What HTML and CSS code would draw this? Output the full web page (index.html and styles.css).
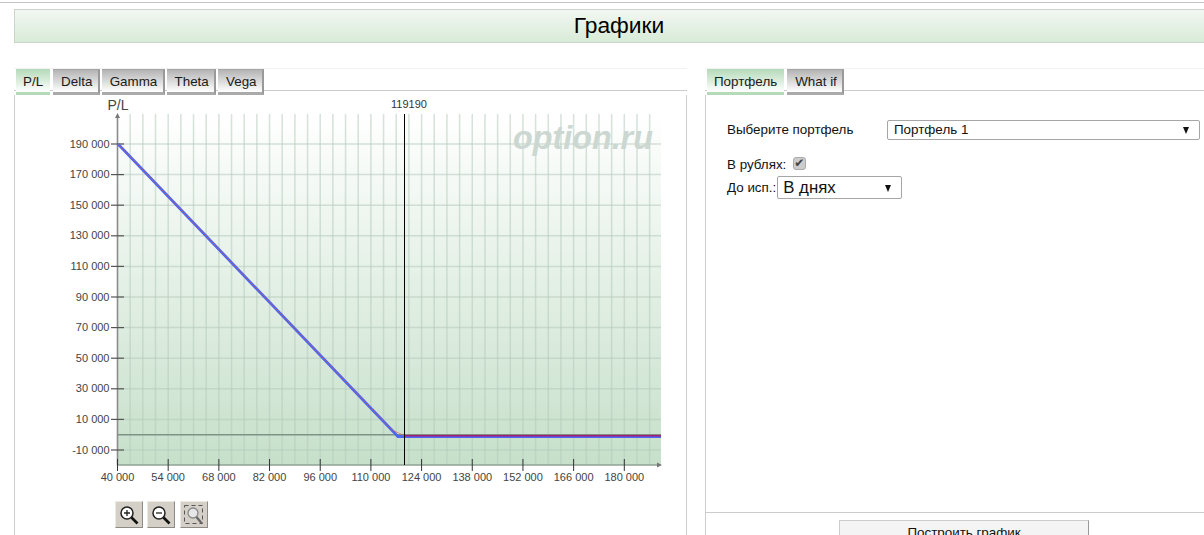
FILE: index.html
```html
<!DOCTYPE html>
<html lang="ru">

<head>
    <meta charset="UTF-8">
    <title>Графики</title>
    <link rel="stylesheet" href="styles.css">
</head>

<body>
    <div class="topline"></div>
    <h1 class="title">Графики</h1>
    <div class="columns">
        <div class="left">
            <ul class="tabs">
                <li class="active">P/L</li>
                <li>Delta</li>
                <li>Gamma</li>
                <li>Theta</li>
                <li>Vega</li>
            </ul>
            <div class="panel chart-panel">
                <svg class="chart" width="671" height="400" viewBox="15 95 671 400" id="chart"></svg>
                <div class="zoom-btns">
                    <button class="zoom-btn" type="button">
                        <svg width="22" height="22" viewBox="0 0 22 22">
                            <circle cx="9" cy="9" r="6" fill="#fff" stroke="#222" stroke-width="1.5" />
                            <path d="M6 9h6M9 6v6" stroke="#222" stroke-width="1.3" fill="none" />
                            <path d="M13.5 13.5l6 6" stroke="#111" stroke-width="2.6" fill="none" />
                        </svg>
                    </button>
                    <button class="zoom-btn" type="button">
                        <svg width="22" height="22" viewBox="0 0 22 22">
                            <circle cx="9" cy="9" r="6" fill="#fff" stroke="#222" stroke-width="1.5" />
                            <path d="M6 9h6" stroke="#222" stroke-width="1.3" fill="none" />
                            <path d="M13.5 13.5l6 6" stroke="#111" stroke-width="2.6" fill="none" />
                        </svg>
                    </button>
                    <button class="zoom-btn zoom-btn-off" type="button">
                        <svg width="22" height="22" viewBox="0 0 22 22">
                            <rect x="1.5" y="1.5" width="18" height="18" fill="none" stroke="#555" stroke-dasharray="4 3" />
                            <circle cx="10" cy="9" r="5" fill="#e6e6e6" stroke="#888" stroke-width="1.3" />
                            <path d="M13.5 13l5 6" stroke="#666" stroke-width="2.2" fill="none" />
                        </svg>
                    </button>
                </div>
            </div>
        </div>
        <div class="right">
            <ul class="tabs">
                <li class="active">Портфель</li>
                <li>What if</li>
            </ul>
            <div class="panel form-panel">
                <div class="form">
                    <div class="row-portfolio">
                        <label class="portfolio-label">Выберите портфель</label>
                        <div class="select-wrap portfolio-select">
                            <select>
                                <option>Портфель 1</option>
                            </select>
                        </div>
                    </div>
                    <div class="row-rub">
                        <label>В рублях:</label>
                        <input type="checkbox" checked disabled>
                    </div>
                    <div class="row-exp">
                        <label>До исп.:</label>
                        <div class="select-wrap days-select">
                            <select>
                                <option>В днях</option>
                            </select>
                        </div>
                    </div>
                </div>
                <div class="form-foot">
                    <button class="build" type="button">Построить график</button>
                </div>
            </div>
        </div>
    </div>
    <script>
        const chart = document.getElementById('chart');
        const NS = 'http://www.w3.org/2000/svg';

        function add(tag, attrs, text) {
            const el = document.createElementNS(NS, tag);
            for (const k in attrs) el.setAttribute(k, attrs[k]);
            if (text) el.textContent = text;
            chart.appendChild(el);
            return el;
        }

        const defs = add('defs', {});
        const grad = document.createElementNS(NS, 'linearGradient');
        grad.setAttribute('id', 'plotbg');
        grad.setAttribute('x1', '0');
        grad.setAttribute('y1', '0');
        grad.setAttribute('x2', '0');
        grad.setAttribute('y2', '1');
        [['0', '#ffffff'], ['1', '#c6e0ca']].forEach(s => {
            const stop = document.createElementNS(NS, 'stop');
            stop.setAttribute('offset', s[0]);
            stop.setAttribute('stop-color', s[1]);
            grad.appendChild(stop);
        });
        defs.appendChild(grad);

        const plotL = 117.5, plotR = 661, plotT = 114, plotB = 465;
        const stepX = 12.67, stepY = 30.6;

        add('rect', { x: plotL, y: plotT, width: plotR - plotL, height: plotB - plotT, fill: 'url(#plotbg)' });

        // grid
        for (let x = plotL + stepX; x < plotR; x += stepX) {
            add('line', { x1: x, y1: plotT, x2: x, y2: plotB, stroke: '#b4cbbc', 'stroke-opacity': 0.55, 'stroke-width': 1.5 });
        }
        for (let i = 0; i < 11; i++) {
            const y = 144 + i * stepY;
            add('line', { x1: plotL, y1: y, x2: plotR, y2: y, stroke: '#b4cbbc', 'stroke-opacity': 0.55, 'stroke-width': 1.5 });
        }

        add('text', { x: 513, y: 149, class: 'watermark' }, 'option.ru');

        // zero line
        add('line', { x1: plotL, y1: 434.7, x2: plotR, y2: 434.7, stroke: '#7f9285', 'stroke-width': 1.4 });

        // axes
        add('line', { x1: plotL, y1: 116, x2: plotL, y2: plotB, stroke: '#8c8c8c', 'stroke-width': 1.6 });
        add('line', { x1: plotL, y1: plotB, x2: plotR - 2, y2: plotB, stroke: '#8fa394', 'stroke-width': 1.4 });
        add('path', { d: 'M117.5 113l-2.5 5h5z', fill: '#777' });
        add('path', { d: 'M662 465l-5-2.5v5z', fill: '#777' });

        // y ticks and labels
        const ys = ['190 000', '170 000', '150 000', '130 000', '110 000', '90 000', '70 000', '50 000', '30 000', '10 000', '-10 000'];
        ys.forEach((t, i) => {
            const y = 144 + i * stepY;
            add('line', { x1: 111, y1: y, x2: 124, y2: y, stroke: '#555', 'stroke-width': 1.2 });
            add('text', { x: 109.5, y: y + 3.5, class: 'tick', 'text-anchor': 'end' }, t);
        });

        // x ticks and labels
        const xs = ['40 000', '54 000', '68 000', '82 000', '96 000', '110 000', '124 000', '138 000', '152 000', '166 000', '180 000'];
        xs.forEach((t, i) => {
            const x = plotL + i * 50.68;
            add('line', { x1: x, y1: 459, x2: x, y2: 471, stroke: '#333', 'stroke-width': 1 });
            add('text', { x: x, y: 481, class: 'tick', 'text-anchor': 'middle' }, t);
        });

        // P/L lines
        add('path', { d: 'M118 144L398 436.5H661', fill: 'none', stroke: '#4a68f2', 'stroke-width': 2.8 });
        add('path', { d: 'M118 144L392 430L404 435.4H661', fill: 'none', stroke: '#e8504a', 'stroke-width': 1, 'stroke-opacity': 0.55 });
        add('line', { x1: 404, y1: 435.8, x2: 661, y2: 435.8, stroke: '#a01f74', 'stroke-width': 1.4 });

        // current price
        add('line', { x1: 404.5, y1: 114, x2: 404.5, y2: 465, stroke: '#000', 'stroke-width': 1 });
        add('text', { x: 409, y: 108, class: 'marker', 'text-anchor': 'middle' }, '119190');
        add('text', { x: 118, y: 110, class: 'axis-name', 'text-anchor': 'middle' }, 'P/L');
    </script>
</body>

</html>
```
FILE: styles.css
```css
* {
    margin: 0;
    padding: 0;
    box-sizing: border-box;
}

html,
body {
    height: 535px;
    overflow: hidden;
}

body {
    background: #fff;
    font-family: "Liberation Sans", Arial, sans-serif;
    font-size: 13.4px;
    color: #111;
    padding-top: 2px;
}

ul {
    list-style: none;
}

.topline {
    height: 1px;
    background: #c4c4c4;
}

.title {
    margin: 6px 0 0 14px;
    width: 1210px;
    height: 34px;
    border: 1px solid #ccd2cc;
    background: linear-gradient(#f2f7f2, #d8ebd8);
    font-size: 22.8px;
    font-weight: normal;
    line-height: 31px;
    text-align: center;
    color: #000;
}

.columns {
    display: flex;
    margin-top: 25px;
    padding-left: 14px;
    gap: 18px;
}

.left {
    width: 673px;
    flex: none;
}

.right {
    flex: 1;
    min-width: 0;
}

.tabs {
    display: flex;
    height: 27px;
    padding-left: 2px;
    gap: 2px;
    border-top: 1px solid #f2f2f2;
    background: linear-gradient(#ccc, #ccc) left 21px / 100% 1px no-repeat;
}

.tabs li {
    height: 26px;
    padding: 2px 5.25px 0 8px;
    line-height: 20px;
    border-top: 1px solid #a6a6a6;
    border-right: 2px solid #999;
    border-bottom: 3px solid #aaa;
    background: linear-gradient(#b4b4b4, #fff);
    color: #1a1a1a;
}

.tabs li.active {
    margin-right: 1px;
    padding: 3px 7px 0;
    border-top: 0;
    border-right: 0;
    border-bottom-color: #b4dab8;
    background: linear-gradient(#b4dab8, #fff);
}

.panel {
    border-left: 1px solid #ccc;
    border-right: 1px solid #ccc;
}

.chart-panel {
    height: 440px;
}

.chart {
    display: block;
}

.watermark {
    font-size: 32.3px;
    font-weight: bold;
    font-style: italic;
    fill: #cbd7d0;
}

.tick {
    font-size: 11px;
    fill: #444;
}

.marker {
    font-size: 11px;
    fill: #333;
}

.axis-name {
    font-size: 14px;
    fill: #444;
}

.zoom-btns {
    display: flex;
    gap: 4px;
    margin: 6px 0 0 100px;
}

.zoom-btn {
    width: 28px;
    height: 27px;
    display: flex;
    align-items: center;
    justify-content: center;
    background: #d4d0c8;
    border: 1px solid;
    border-color: #eeeae2 #8c8a84 #8c8a84 #eeeae2;
}

.zoom-btn-off {
    margin-left: 1px;
}

.form-panel {
    height: 440px;
    border-right: 0;
    display: flex;
    flex-direction: column;
}

.form {
    flex: none;
    height: 418px;
    padding: 25px 0 0 21px;
    border-bottom: 1px solid #ccc;
}

.row-portfolio {
    display: flex;
    align-items: center;
    height: 19px;
    margin-bottom: 18px;
}

.portfolio-label {
    width: 160px;
}

.row-rub {
    display: flex;
    align-items: center;
    gap: 7px;
    height: 14px;
}

.row-rub input {
    position: relative;
    width: 13px;
    height: 13px;
    margin-top: -2px;
    appearance: none;
    background: #ccc;
    border: 1px solid #aaa;
    border-radius: 3px;
}

.row-rub input::after {
    content: "\2714";
    position: absolute;
    left: 0;
    top: -2px;
    font-size: 12px;
    line-height: 14px;
    color: #444;
    font-family: "DejaVu Sans", sans-serif;
}

.row-exp {
    display: flex;
    align-items: center;
    gap: 1px;
    margin-top: 5px;
}

.select-wrap {
    position: relative;
}

.select-wrap::after {
    content: "";
    position: absolute;
    top: 50%;
    right: 11px;
    margin-top: -3px;
    border-left: 3.5px solid transparent;
    border-right: 3.5px solid transparent;
    border-top: 7px solid #111;
}

.select-wrap select {
    display: block;
    width: 100%;
    height: 100%;
    appearance: none;
    background: #fff;
    border: 1px solid #a6a6a6;
    border-radius: 2px;
    font-family: "Liberation Sans", Arial, sans-serif;
    color: #111;
}

.portfolio-select {
    width: 313px;
    height: 20px;
}

.portfolio-select select {
    font-size: 13.4px;
    padding-left: 6px;
}

.days-select {
    width: 125px;
    height: 23px;
}

.days-select select {
    font-size: 16.8px;
    padding-left: 5px;
}

.form-foot {
    padding: 7px 0 0 133px;
}

.build {
    display: block;
    width: 250px;
    height: 30px;
    padding-bottom: 5px;
    background: #f4f4f4;
    border: 1px solid #ccc;
    border-right-color: #999;
    font-family: "Liberation Sans", Arial, sans-serif;
    font-size: 13.4px;
    color: #111;
}
```
